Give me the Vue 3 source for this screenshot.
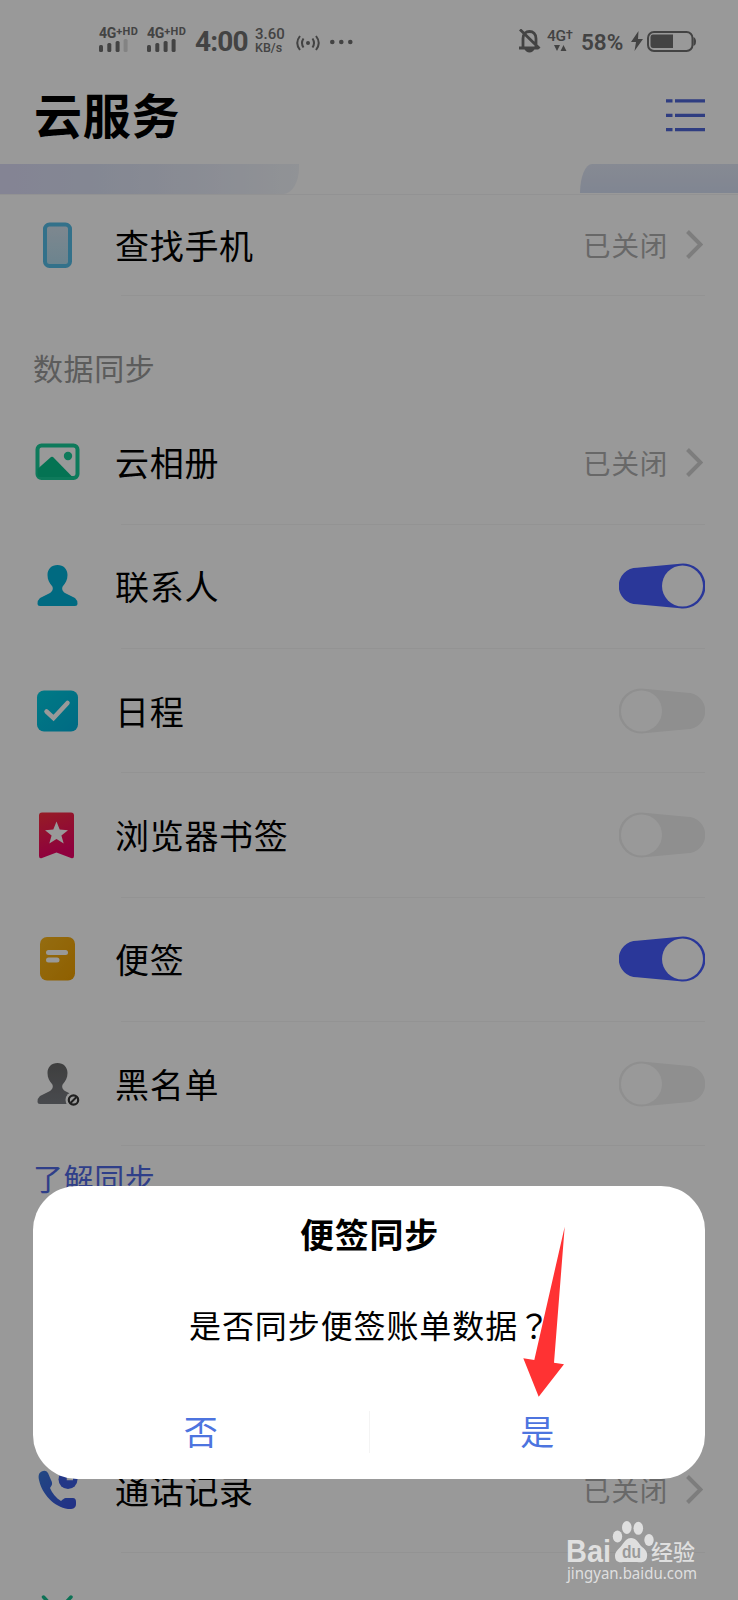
<template>
  <main class="phone">
    <div class="page">
      <div class="statusBar">
        <div v-for="n in 2" :key="n" class="signal">
          <p>4G<sup>+HD</sup></p>
          <svg width="32" height="12" viewBox="0 0 32 12">
            <rect x="0" y="5" width="4" height="7" rx="1.5" />
            <rect x="8.3" y="3" width="4" height="9" rx="1.5" />
            <rect x="16.6" y="1" width="4" height="11" rx="1.5" />
            <rect x="24.6" y="-1" width="4" height="13" rx="1.5" :class="{ weak: n === 1 }" />
          </svg>
        </div>
        <b class="time">4:00</b>
        <div class="speed">
          <p>3.60</p>
          <p>KB/s</p>
        </div>
        <svg class="hotspot" width="24" height="18" viewBox="0 0 24 18">
          <circle cx="12" cy="9" r="2" />
          <path class="line" d="M7.5 4.5Q4.5 9 7.5 13.5M16.5 4.5Q19.5 9 16.5 13.5M4 2Q-1.5 9 4 16M20 2Q25.5 9 20 16" />
        </svg>
        <svg class="dots" width="24" height="6" viewBox="0 0 24 6">
          <circle cx="2.3" cy="3" r="2.3" />
          <circle cx="11.3" cy="3" r="2.3" />
          <circle cx="20.3" cy="3" r="2.3" />
        </svg>
        <svg class="bell" width="22" height="25" viewBox="0 0 22 25">
          <path class="line bold" d="M4 18V9.5C4 5 7 2.5 10.5 2.5S17 5 17 9.5V18M0 19H19M1 .5L20.5 19.5" />
          <path d="M5.5 20H15.5C14.5 22 13 23.5 10.5 23.5S6.5 22 5.5 20Z" />
        </svg>
        <div class="data">
          <p>4G<small>†</small></p>
          <svg width="13" height="6" viewBox="0 0 13 6">
            <path d="M0 0H6L3 6ZM6.5 6H12.5L9.5 0Z" />
          </svg>
        </div>
        <b class="percent">58%</b>
        <svg class="bolt" width="12" height="20" viewBox="0 0 12 20">
          <path d="M7.5 0L0 11H5L3.5 20L12 8H7Z" />
        </svg>
        <svg class="battery" width="50" height="21" viewBox="0 0 50 21">
          <rect class="line" x="1" y="1" width="44.5" height="19" rx="6" />
          <path d="M46.5 6Q49 7 49 10.5T46.5 15Z" />
          <path d="M6 3.5H26V17H6Q3.5 17 3.5 14V6.5Q3.5 3.5 6 3.5Z" />
        </svg>
      </div>

      <header class="header">
        <h1>云服务</h1>
        <svg width="39" height="33" viewBox="0 0 39 33">
          <path d="M0 1.8H6.5M9 1.8H39M0 16.3H6.5M9 16.3H39M0 30.6H6.5M9 30.6H39" />
        </svg>
      </header>

      <div class="banner">
        <div class="bannerLeft"></div>
        <div class="bannerRight"></div>
      </div>

      <section class="list">
        <template v-for="item in items" :key="item.name">
          <h2 v-if="item.name === '云相册'">数据同步</h2>
          <div class="row" :class="{ first: item.icon === 'phone' }">
            <div class="icon">
              <svg v-if="item.icon === 'phone'" width="46" height="46" viewBox="0 0 46 46">
                <rect x="11" y="2.5" width="25" height="41.5" rx="4.5" fill="url(#gPhone)" stroke="#55bce6" stroke-width="4" />
              </svg>
              <svg v-if="item.icon === 'album'" width="46" height="46" viewBox="0 0 46 46">
                <rect x="3.500" y="6.5" width="40" height="32.5" rx="4" fill="none" stroke="#18cb98" stroke-width="4" />
                <path d="M3.500 30L17 18Q18 17.300 19 18L38.500 38H5.500Q3.500 38 3.500 36Z" fill="#08c08a" />
                <circle cx="34" cy="17" r="4.200" fill="#18cb98" />
              </svg>
              <svg v-if="item.icon === 'contact'" width="46" height="46" viewBox="0 0 46 46">
                <path :d="person" fill="#00b1d8" />
              </svg>
              <svg v-if="item.icon === 'calendar'" width="46" height="46" viewBox="0 0 46 46">
                <rect x="3" y="2.5" width="41" height="41" rx="7" fill="url(#gCalendar)" />
                <path d="M12.5 23.5L19.5 30L33.5 15" fill="none" stroke="#fff" stroke-width="4.5" stroke-linecap="round" />
              </svg>
              <svg v-if="item.icon === 'bookmark'" width="46" height="47" viewBox="0 0 46 47">
                <path d="M8 0.5H37Q40 0.5 40 3.5V44Q40 47 37 46L22.500 40.500L8 46Q5 47 5 44V3.500Q5 0.500 8 0.500Z" fill="url(#gBookmark)" />
                <path d="M22.500 9.500L25.700 17.600L34 18.200L27.400 23.500L29.700 31.500L22.500 27L15.300 31.500L17.600 23.500L11 18.200L19.300 17.600Z" fill="#fff" />
              </svg>
              <svg v-if="item.icon === 'note'" width="46" height="46" viewBox="0 0 46 46">
                <rect x="6" y="1" width="35" height="43.5" rx="7" fill="url(#gNote)" />
                <rect x="12" y="14" width="22" height="5" rx="2.5" fill="#fff" />
                <rect x="12" y="21.5" width="13.5" height="5" rx="2.5" fill="#fff" />
              </svg>
              <svg v-if="item.icon === 'blacklist'" width="48" height="46" viewBox="0 0 48 46">
                <path :d="person" fill="url(#gPerson)" />
                <circle cx="39.5" cy="39" r="8" fill="#fff" />
                <circle cx="39.5" cy="39" r="4.7" fill="none" stroke="#353535" stroke-width="2.2" />
                <path d="M36.5 42L42.5 36" stroke="#353535" stroke-width="2" />
              </svg>
            </div>
            <span class="name">{{ item.name }}</span>
            <template v-if="item.type === 'link'">
              <span class="state">已关闭</span>
              <svg class="arrow" width="17" height="29" viewBox="0 0 17 29">
                <path d="M1.5 1.5L14.5 14.5L1.5 27.5" />
              </svg>
            </template>
            <svg
              v-else
              class="toggle"
              :class="{ on: item.on }"
              width="86"
              height="46"
              viewBox="0 0 86 46"
              @click="item.on = !item.on"
            >
              <path d="M18 4.7L61 0.7A22.5 22.5 0 1 1 61 45.3L18 41.3A18.3 18.3 0 0 1 18 4.7Z" />
              <circle cx="63.5" cy="23" r="20.5" />
            </svg>
          </div>
          <div class="divider"></div>
        </template>
      </section>

      <p class="learn">了解同步</p>

      <section class="more">
        <div class="row">
          <div class="icon">
            <svg width="46" height="46" viewBox="0 0 46 46">
              <path d="M9 4C5 5 4 8 5 13C8 27 20 40 34 42C39 42.5 42 41 42 37V35Q42 31 39 31H33C29 31 29 33 27 34C22 31 18 26 16 21C18 18 19 17 17 13L14 6Q12 3 9 4Z" fill="url(#gCall)" />
              <circle cx="34" cy="12.5" r="9.5" fill="#3b5ce2" />
              <path d="M34 5V12H39" fill="none" stroke="#fff" stroke-width="2.5" />
            </svg>
          </div>
          <span class="name">通话记录</span>
          <span class="state">已关闭</span>
          <svg class="arrow" width="17" height="29" viewBox="0 0 17 29">
            <path d="M1.5 1.5L14.5 14.5L1.5 27.5" />
          </svg>
        </div>
        <div class="divider"></div>
        <div class="row last">
          <div class="icon">
            <svg width="46" height="46" viewBox="0 0 46 46">
              <path d="M9.5 4L16 11M37 4L30.5 11" stroke="#16bd8e" stroke-width="3.5" stroke-linecap="round" />
              <path d="M5 25A18 17 0 0 1 41 25Z" fill="#16bd8e" />
            </svg>
          </div>
          <span class="name">应用</span>
        </div>
      </section>
    </div>

    <div class="mask"></div>

    <div v-if="showDialog" class="dialog">
      <h3>便签同步</h3>
      <p>是否同步便签账单数据<span class="mark">？</span></p>
      <div class="buttons">
        <button @click="showDialog = false">否</button>
        <i></i>
        <button @click="showDialog = false">是</button>
      </div>
    </div>

    <svg class="pointer" width="42" height="171" viewBox="0 0 42 171">
      <path d="M41.7 0.7L31 136.7L41 138.3L15.7 170.7L0.3 132.3L11.3 134Z" fill="#ff3233" />
    </svg>

    <svg class="watermark" width="140" height="66" viewBox="0 0 140 66">
      <text x="5" y="41.500" class="logo" textLength="45" lengthAdjust="spacingAndGlyphs">Bai</text>
      <ellipse cx="56.5" cy="16.5" rx="4.7" ry="6" />
      <ellipse cx="65.8" cy="7.5" rx="4.8" ry="6.5" />
      <ellipse cx="77.3" cy="8.3" rx="4.8" ry="6.5" />
      <ellipse cx="88" cy="20" rx="4.7" ry="6" />
      <path d="M70 18C75 18 77 22 80 26C84 29 87 32 86 37C85 43 80 42.5 76 42H62C57 43 54 41 54 36C54 31 58 29 61 25C64 21 66 18 70 18Z" />
      <text x="61" y="38" class="du" textLength="19" lengthAdjust="spacingAndGlyphs">du</text>
      <text x="90" y="40" class="jy" textLength="44">经验</text>
      <text x="6" y="59" class="url" textLength="130" lengthAdjust="spacingAndGlyphs">jingyan.baidu.com</text>
    </svg>

    <svg width="0" height="0" class="defs">
      <defs>
        <linearGradient id="gPhone" x2="0" y2="1">
          <stop offset="0" stop-color="#d3e2ee" />
          <stop offset="1" stop-color="#b3dced" />
        </linearGradient>
        <linearGradient id="gCalendar" x2="1" y2="1">
          <stop offset="0" stop-color="#00ccdf" />
          <stop offset="1" stop-color="#00b1dc" />
        </linearGradient>
        <linearGradient id="gBookmark" x2="0.3" y2="1">
          <stop offset="0" stop-color="#fa303e" />
          <stop offset="1" stop-color="#ee0068" />
        </linearGradient>
        <linearGradient id="gNote" x2="1" y2="1">
          <stop offset="0" stop-color="#f8b51c" />
          <stop offset="1" stop-color="#ee9f00" />
        </linearGradient>
        <linearGradient id="gPerson" x2="0" y2="1">
          <stop offset="0" stop-color="#696969" />
          <stop offset="1" stop-color="#797c82" />
        </linearGradient>
        <linearGradient id="gCall" x2="1" y2="1">
          <stop offset="0" stop-color="#3a78da" />
          <stop offset="1" stop-color="#3a50e0" />
        </linearGradient>
      </defs>
    </svg>
  </main>
</template>

<script setup>
import { ref } from "vue";

const showDialog = ref(true);

const items = ref([
  { name: "查找手机", icon: "phone", type: "link" },
  { name: "云相册", icon: "album", type: "link" },
  { name: "联系人", icon: "contact", type: "switch", on: true },
  { name: "日程", icon: "calendar", type: "switch", on: false },
  { name: "浏览器书签", icon: "bookmark", type: "switch", on: false },
  { name: "便签", icon: "note", type: "switch", on: true },
  { name: "黑名单", icon: "blacklist", type: "switch", on: false }
]);

const person =
  "M23.500 2C29.500 2 33.500 6 33.500 12C33.500 17 31.500 20 29 23C27.500 25 28 28 31 30L41 35Q43.500 37 43.500 41Q43.500 43 41 43H6Q3.500 43 3.500 41Q3.500 37 6 35L16 30C19 28 19.500 25 18 23C15.500 20 13.500 17 13.500 12C13.500 6 17.500 2 23.500 2Z";
</script>

<style>
body {
  margin: 0;
  background: #999;
}
</style>

<style scoped>
.phone {
  position: relative;
  width: 738px;
  height: 1600px;
  overflow: hidden;
  background: #fff;
  color: #000;
  font-family: "Noto Sans CJK SC", sans-serif;
}

h1,
h2,
h3,
p {
  margin: 0;
}

svg {
  display: block;
  flex: none;
}

.page {
  height: 1600px;
  overflow: hidden;
}

/* 状态栏 */
.statusBar {
  display: flex;
  align-items: center;
  box-sizing: border-box;
  height: 82px;
  padding-left: 99px;
  color: #707070;
  fill: #707070;
  font-family: Roboto, sans-serif;
  white-space: nowrap;
}

.signal {
  width: 48px;
  flex: none;
}

.signal p {
  height: 13px;
  margin-top: -4px;
  line-height: 13px;
  font-size: 14px;
  font-weight: 700;
  letter-spacing: -0.2px;
}

.signal sup {
  display: inline-block;
  font-size: 11px;
  line-height: 10px;
  vertical-align: 3px;
  letter-spacing: 0.4px;
}

.signal svg {
  overflow: visible;
}

.weak {
  opacity: 0.25;
}

.time {
  flex: none;
  width: 60px;
  font-size: 28px;
  line-height: 30px;
  letter-spacing: -0.8px;
  padding-top: 2px;
}

.speed {
  flex: none;
  width: 41px;
  margin-left: 0;
  font-size: 15px;
  font-weight: 500;
  line-height: 13px;
}

.speed p:last-child {
  font-size: 12.5px;
}

.line {
  fill: none;
  stroke: #707070;
  stroke-width: 2;
}

.bold {
  stroke-width: 2.8;
}

.hotspot {
  margin-top: 4px;
}

.dots {
  margin: 1px 0 0 10px;
}

.bell {
  margin-left: 165px;
}

.data {
  flex: none;
  width: 34px;
  margin-left: 6px;
}

.data p {
  height: 14px;
  margin-top: -3px;
  font-size: 15.5px;
  font-weight: 500;
  line-height: 14px;
  letter-spacing: -0.3px;
}

.data small {
  font-size: 13px;
  vertical-align: 2px;
}

.data svg {
  margin: 3px 0 0 7px;
}

.percent {
  flex: none;
  width: 50px;
  font-size: 22.5px;
  font-weight: 600;
  line-height: 24px;
  padding-top: 2px;
}

.battery {
  margin-left: 4px;
}

/* 标题 */
.header {
  display: flex;
  align-items: center;
  justify-content: space-between;
  box-sizing: border-box;
  height: 82px;
  padding: 0 33px 15px 34px;
}

.header h1 {
  margin-top: -6px;
  font-size: 48px;
  font-weight: 700;
  line-height: 60px;
  letter-spacing: 0.8px;
}

.header svg {
  fill: none;
  stroke: #4f66d8;
  stroke-width: 3.2;
}

.banner {
  display: flex;
  justify-content: space-between;
  height: 30px;
  border-bottom: 1px solid #f4f4f6;
}

.bannerLeft {
  width: 299px;
  height: 30px;
  border-radius: 0 0 16px 0 / 0 0 26px 0;
  background: linear-gradient(90deg, #dcdcf7, #dce2f6 30%, #e6eaf7 65%, #f2f5fa);
}

.bannerRight {
  width: 158px;
  height: 29px;
  border-radius: 12px 0 0 0 / 29px 0 0 0;
  background: linear-gradient(#e0e6f5, #d6dff3);
}

/* 列表 */
.row {
  display: flex;
  align-items: center;
  height: 123.3px;
  padding: 0 33px;
}

.row.first {
  height: 99.5px;
}

.row.last .name,
.row.last svg {
  margin-top: 4px;
}

.icon {
  width: 81.5px;
  padding-left: 0.5px;
}

.name {
  flex: 1;
  font-size: 34px;
  line-height: 40px;
  letter-spacing: 0.7px;
}

.state {
  margin-top: -1px;
  color: #aeaeae;
  font-size: 27.5px;
  line-height: 34px;
  letter-spacing: 0.8px;
}

.arrow {
  margin: 0 2px 0 18px;
  fill: none;
  stroke: #d0d0d0;
  stroke-width: 4;
}

.divider {
  height: 1px;
  margin: 0 33px 0 121px;
  background: #f6f6f6;
}

.list h2 {
  height: 105px;
  padding-left: 33px;
  color: #999;
  font-size: 30px;
  font-weight: 400;
  line-height: 142px;
  letter-spacing: 0.6px;
}

.toggle {
  transform: scaleX(-1);
  fill: #efefef;
}

.toggle.on {
  transform: none;
  fill: #465dff;
}

.toggle circle {
  fill: #fff;
}

.learn {
  height: 282px;
  padding: 11px 0 0 33px;
  box-sizing: border-box;
  color: #4f69e4;
  font-size: 30px;
  line-height: 40px;
  letter-spacing: 0.6px;
}

.mask {
  position: absolute;
  inset: 0;
  background: rgba(0, 0, 0, 0.4);
}

/* 弹窗 */
.dialog {
  position: absolute;
  left: 33px;
  top: 1186px;
  width: 672px;
  height: 293px;
  border-radius: 44px;
  background: #fff;
  text-align: center;
}

.dialog h3 {
  padding: 28px 0 0 1px;
  font-size: 34px;
  font-weight: 700;
  line-height: 40px;
  letter-spacing: 0.7px;
}

.dialog p {
  padding: 50px 0 0 2px;
  font-size: 32px;
  line-height: 40px;
  letter-spacing: 0.9px;
}

.dialog .mark {
  font-family: "Noto Sans CJK TC", sans-serif;
}

.buttons {
  display: flex;
  align-items: center;
  height: 84px;
  margin-top: 46px;
}

.buttons button {
  flex: 1;
  padding: 0 0 2px;
  border: 0;
  background: none;
  color: #4d74df;
  font-family: inherit;
  font-size: 34px;
  line-height: 50px;
}

.buttons i {
  width: 1px;
  height: 42px;
  background: #f4f4f4;
}

.pointer {
  position: absolute;
  left: 523px;
  top: 1226px;
}

.watermark {
  position: absolute;
  left: 561px;
  top: 1520px;
  fill: #dfdfdf;
}

.logo {
  font: 700 31px "Liberation Sans", sans-serif;
}

.du {
  fill: #999;
  font: 700 19px "Liberation Sans", sans-serif;
}

.jy {
  font: 500 22px "Noto Sans CJK SC", sans-serif;
}

.url {
  font: 400 16px "Noto Sans", sans-serif;
}

.defs {
  position: absolute;
}
</style>
